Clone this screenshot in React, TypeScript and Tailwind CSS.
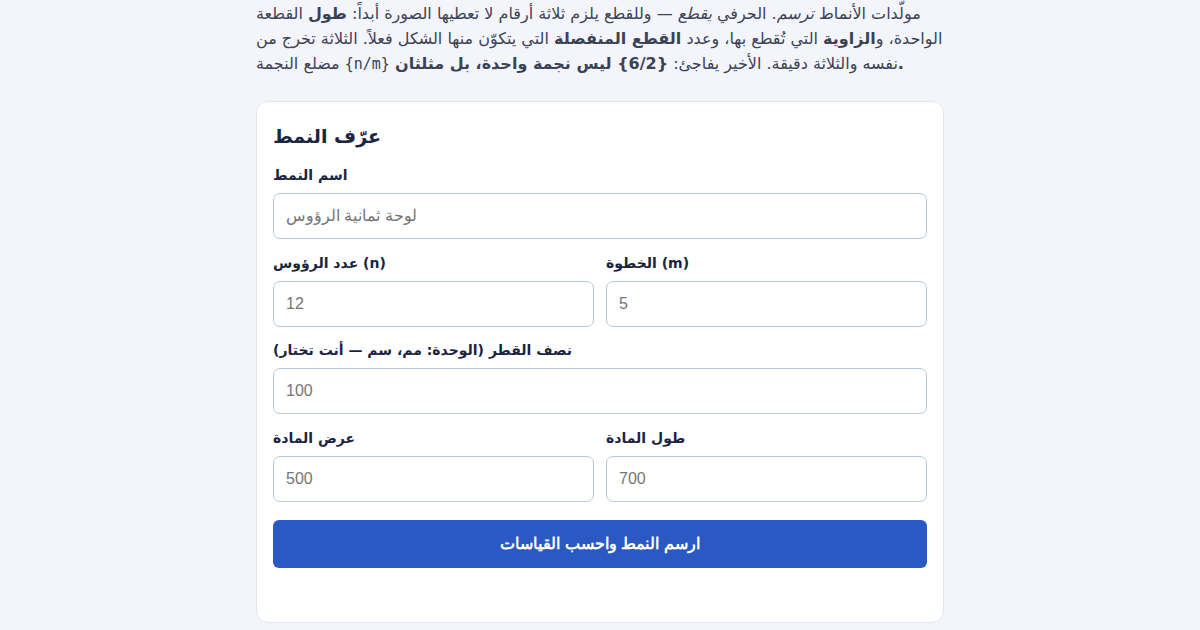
import React from "react";

const labelCls = "block h-5 mb-2 text-[14px] leading-5 font-bold text-[#1b2540]";
const inputCls =
  "block w-full h-[46px] rounded-[7px] border border-[#b9c5dc] bg-white px-3 text-[16px] text-[#1b2540] placeholder:text-[#757575] outline-none [font-family:'Liberation_Sans',sans-serif]";

function Field({ label, placeholder }: { label: string; placeholder: string }) {
  return (
    <div>
      <label className={labelCls}>{label}</label>
      <input className={inputCls} placeholder={placeholder} />
    </div>
  );
}

export default function App() {
  return (
    <div className="min-h-[630px] bg-[#f4f5fa] [font-family:'DejaVu_Sans',sans-serif]">
      <div className="mx-auto w-[688px]">
        <p className="pt-[1px] text-[16px] leading-[25px] text-[#3a4256]">
          مولّدات الأنماط <em>ترسم</em>. الحرفي <em>يقطع</em> — وللقطع يلزم ثلاثة أرقام لا تعطيها الصورة أبداً:{" "}
          <strong>طول</strong> القطعة الواحدة، و<strong>الزاوية</strong> التي تُقطع بها، وعدد{" "}
          <strong>القطع المنفصلة</strong> التي يتكوّن منها الشكل فعلاً. الثلاثة تخرج من مضلع النجمة{" "}
          <code className="[font-family:'DejaVu_Sans_Mono',monospace] text-[15px]">{"{n/m}"}</code> نفسه والثلاثة دقيقة.
          الأخير يفاجئ: <strong>{"{6/2}"} ليس نجمة واحدة، بل مثلثان.</strong>
        </p>

        <section className="mt-[24px] rounded-[12px] border border-[#e1e5f0] bg-white px-4 pt-4 pb-[54px]">
          <h2 className="h-[36px] text-[19px] leading-[36px] font-bold text-[#1b2540]">عرّف النمط</h2>
          <div className="mt-[11px] flex flex-col">
            <Field label="اسم النمط" placeholder="لوحة ثمانية الرؤوس" />
            <div className="mt-[14px] grid grid-cols-2 gap-3">
              <Field label="عدد الرؤوس (n)" placeholder="12" />
              <Field label="الخطوة (m)" placeholder="5" />
            </div>
            <div className="mt-[13px]">
              <Field label="نصف القطر (الوحدة: مم، سم — أنت تختار)" placeholder="100" />
            </div>
            <div className="mt-[14px] grid grid-cols-2 gap-3">
              <Field label="عرض المادة" placeholder="500" />
              <Field label="طول المادة" placeholder="700" />
            </div>
          </div>
          <button className="mt-[18px] block h-12 w-full rounded-[6px] bg-[#2b59c3] text-[16px] font-bold text-white [font-family:'Liberation_Sans',sans-serif]">
            ارسم النمط واحسب القياسات
          </button>
        </section>
      </div>
    </div>
  );
}
